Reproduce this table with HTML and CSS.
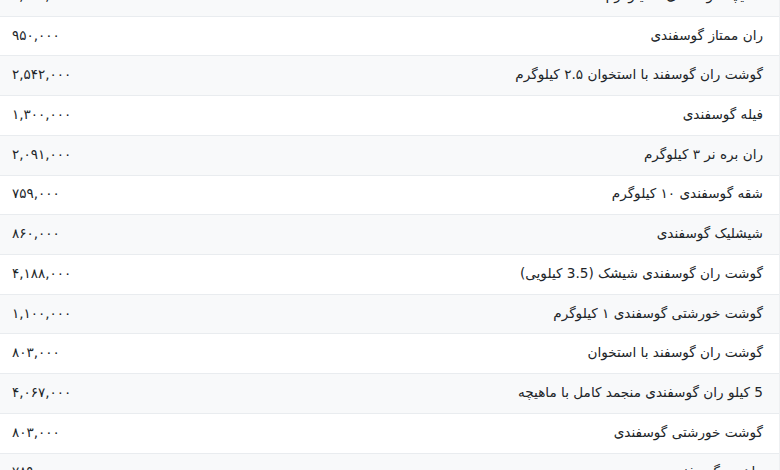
FILE: index.html
```html
<!DOCTYPE html>
<html lang="fa" dir="rtl">
<head>
<meta charset="utf-8">
<title>قیمت گوشت گوسفندی</title>
<link rel="stylesheet" href="styles.css">
</head>
<body>
<div class="viewport">
<table class="price-table">
<tbody>
<tr><td class="name">ماهیچه گوسفندی ۱ کیلوگرم</td><td class="price">۱,۱۹۰,۰۰۰</td></tr>
<tr><td class="name">ران ممتاز گوسفندی</td><td class="price">۹۵۰,۰۰۰</td></tr>
<tr><td class="name">گوشت ران گوسفند با استخوان ۲.۵ کیلوگرم</td><td class="price">۲,۵۴۲,۰۰۰</td></tr>
<tr><td class="name">فیله گوسفندی</td><td class="price">۱,۳۰۰,۰۰۰</td></tr>
<tr><td class="name">ران بره نر ۳ کیلوگرم</td><td class="price">۲,۰۹۱,۰۰۰</td></tr>
<tr><td class="name">شقه گوسفندی ۱۰ کیلوگرم</td><td class="price">۷۵۹,۰۰۰</td></tr>
<tr><td class="name">شیشلیک گوسفندی</td><td class="price">۸۶۰,۰۰۰</td></tr>
<tr><td class="name">گوشت ران گوسفندی شیشک (3.5 کیلویی)</td><td class="price">۴,۱۸۸,۰۰۰</td></tr>
<tr><td class="name">گوشت خورشتی گوسفندی ۱ کیلوگرم</td><td class="price">۱,۱۰۰,۰۰۰</td></tr>
<tr><td class="name">گوشت ران گوسفند با استخوان</td><td class="price">۸۰۳,۰۰۰</td></tr>
<tr><td class="name">5 کیلو ران گوسفندی منجمد کامل با ماهیچه</td><td class="price">۴,۰۶۷,۰۰۰</td></tr>
<tr><td class="name">گوشت خورشتی گوسفندی</td><td class="price">۸۰۳,۰۰۰</td></tr>
<tr><td class="name">ماهیچه گوسفندی</td><td class="price">۷۸۹,۰۰۰</td></tr>
</tbody>
</table>
</div>
</body>
</html>
```

FILE: styles.css
```css
html, body {
  margin: 0;
  padding: 0;
  background: #ffffff;
}

body {
  font-family: "DejaVu Sans", "Noto Sans", sans-serif;
  color: #212529;
  overflow: hidden;
}

.viewport {
  height: 470px;
  overflow: hidden;
  border-right: 1px solid #eef0f2;
}

.price-table {
  width: 100%;
  border-collapse: collapse;
  margin-top: -23px;
}

.price-table tr:nth-child(odd) {
  background: #f8f9fa;
}

.price-table td {
  height: 35.73px;
  padding: 0 16px 3px 12px;
  border-bottom: 1px solid #e9ecef;
  vertical-align: middle;
  font-size: 13.6px;
  line-height: 20px;
}

.price-table td.name {
  text-align: right;
}

.price-table td.price {
  text-align: left;
  font-size: 13.5px;
  width: 120px;
}
```
